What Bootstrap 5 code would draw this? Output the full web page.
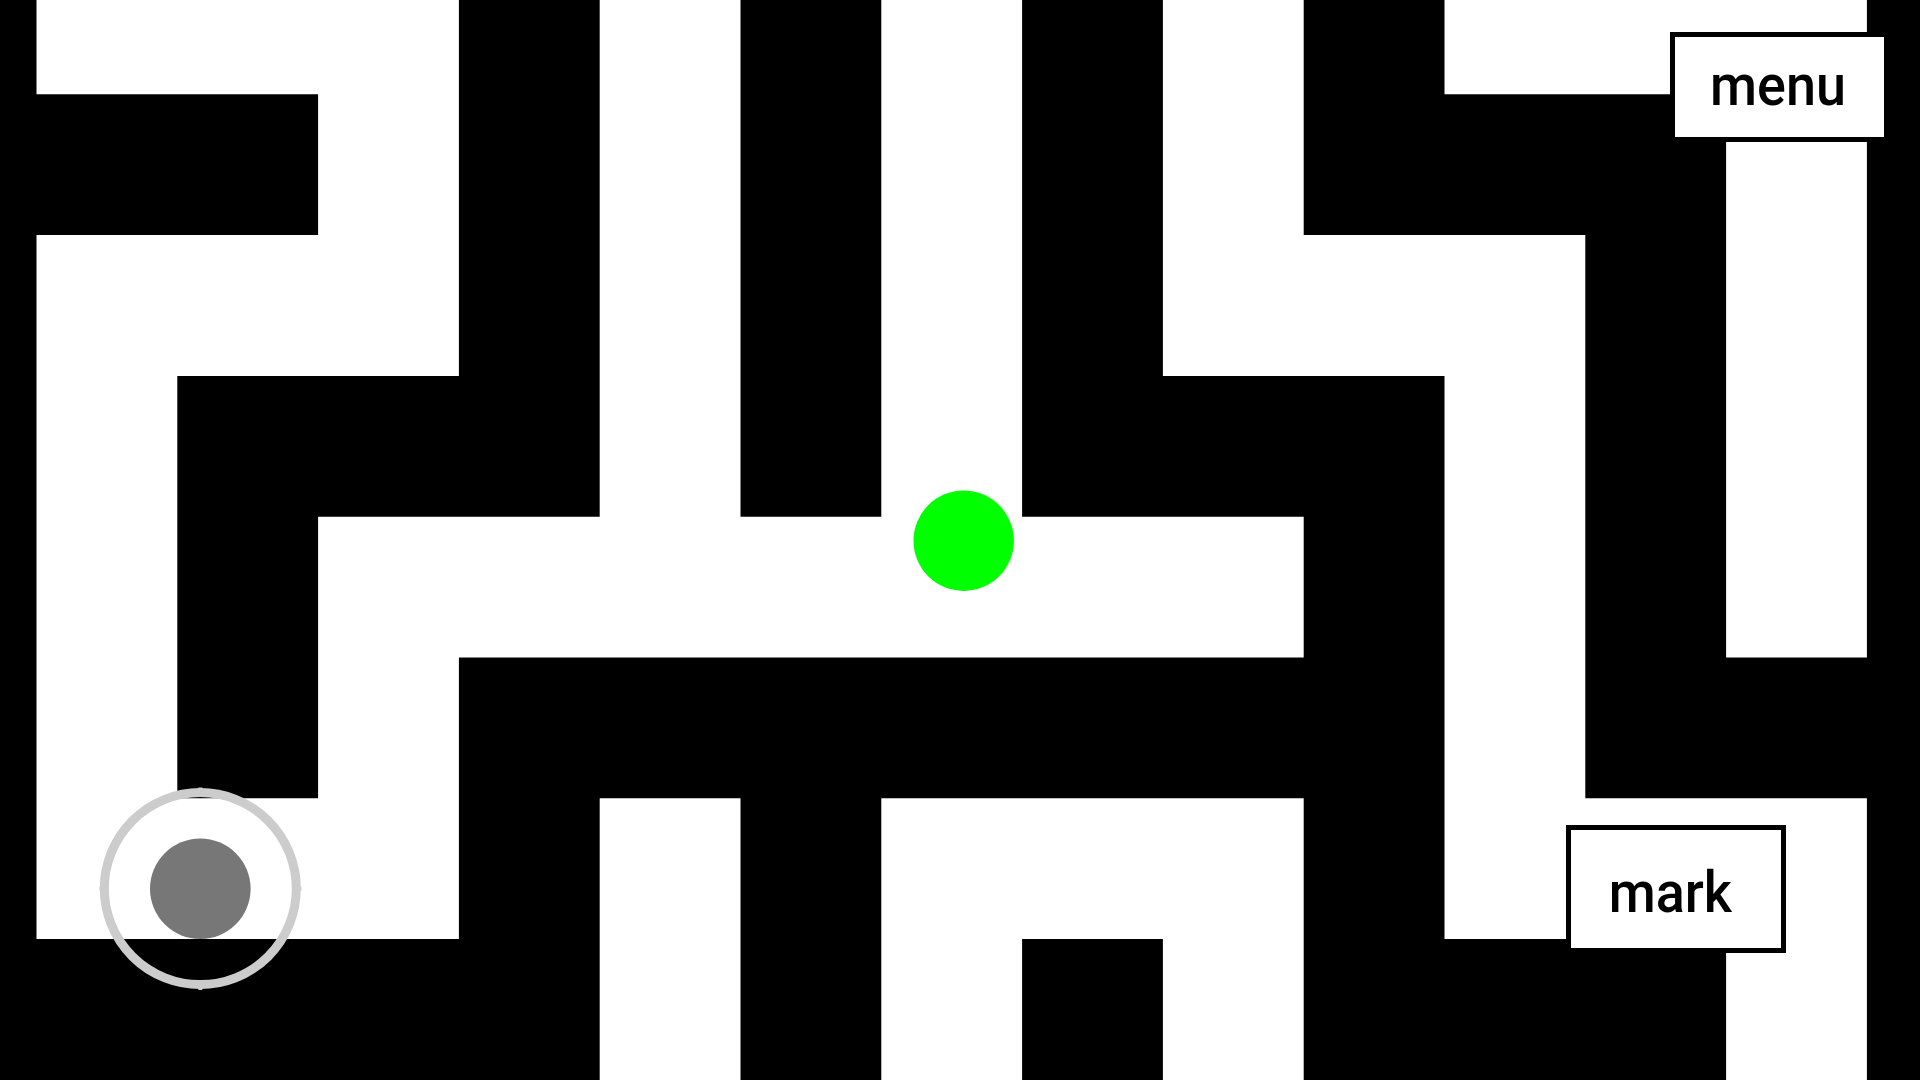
<!doctype html>
<html lang="en">
<head>
<meta charset="utf-8">
<title>Maze</title>
<link href="https://cdn.jsdelivr.net/npm/bootstrap@5.3.0/dist/css/bootstrap.min.css" rel="stylesheet">
<style>
html, body { margin: 0; height: 100%; overflow: hidden; background: #000; }
.maze-stage { width: 1920px; height: 1080px; }
.maze-art { display: block; }
.maze-floor { fill: #fff; }
.maze-player { fill: #0f0; }
.stick-ring { fill: none; stroke: #ccc; stroke-width: 9; }
.stick-knob { fill: #777; }
.stick-nub { fill: #ccc; }
.maze-btn {
  border: 5px solid #000; border-radius: 0; background: #fff; color: #000;
  font-family: Roboto, "Liberation Sans", sans-serif; font-size: 58px; font-weight: 500; line-height: 1;
  display: flex; align-items: center; justify-content: center;
}
.maze-btn:hover, .maze-btn:active { background: #fff; color: #000; border-color: #000; }
.btn-menu { left: 1670px; top: 32px; width: 219px; height: 110px; padding: 0 2px 4px 0; }
.btn-mark { left: 1566px; top: 825px; width: 220px; height: 128px; padding: 6px 12px 0 0; }
.btn-label { display: inline-block; transform: scaleX(.93); }
</style>
</head>
<body>
<div class="maze-stage position-relative">
  <svg class="maze-art" width="1920" height="1080" viewBox="0 0 1920 1080" aria-label="Maze">
    <g transform="translate(36.5 -46.5) scale(140.8)">
      <path class="maze-floor" d="M0 0h3v1h-3z M4 0h1v4h-1z M6 0h1v4h-1z M8 0h1v3h-1z M10 0h3v1h-3z
        M2 1h1v1h-1z M12 1h1v4h-1z M0 2h3v1h-3z M8 2h3v1h-3z M0 3h1v3h-1z M10 3h1v3h-1z
        M2 4h7v1h-7z M2 5h1v1h-1z M0 6h3v1h-3z M4 6h1v2h-1z M6 6h3v1h-3z M10 6h3v1h-3z
        M6 7h1v1h-1z M8 7h1v1h-1z M12 7h1v1h-1z"/>
    </g>
    <circle class="maze-player" cx="963.7" cy="540.7" r="50.2"/>
    <circle class="stick-ring" cx="200.3" cy="888.6" r="96"/>
    <circle class="stick-knob" cx="200.3" cy="888.7" r="50.3"/>
    <path class="stick-nub" d="M198.3 787.5h4v2h-4z M198.3 988h4v2h-4z M99.5 886.6h2v4h-2z M299.5 886.6h2v4h-2z"/>
  </svg>
  <button type="button" class="btn maze-btn btn-menu position-absolute"><span class="btn-label">menu</span></button>
  <button type="button" class="btn maze-btn btn-mark position-absolute"><span class="btn-label">mark</span></button>
</div>
<script src="https://cdn.jsdelivr.net/npm/bootstrap@5.3.0/dist/js/bootstrap.bundle.min.js"></script>
</body>
</html>
